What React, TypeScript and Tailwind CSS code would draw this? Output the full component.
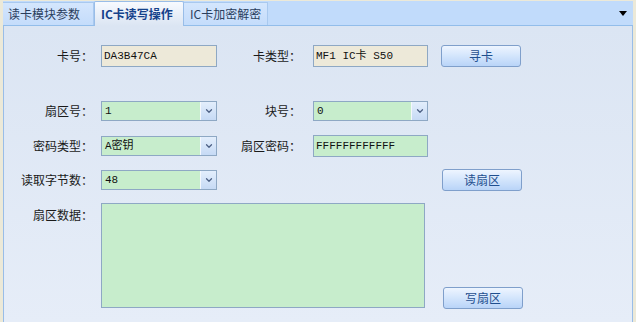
import { ChevronDown } from "lucide-react";

const cjk = "font-['Noto_Sans_CJK_SC','Noto_Sans',sans-serif]";
const mono = "font-['Liberation_Mono','Noto_Sans_CJK_SC',monospace]";

function Label({ text, className = "" }: { text: string; className?: string }) {
  return <div className={`shrink-0 text-right text-[12px] leading-[14px] text-[#1a1a1a] ${cjk} ${className}`}>{text}</div>;
}

function TextBox({ value, tone, w }: { value: string; tone: "beige" | "green"; w: string }) {
  const bg = tone === "beige" ? "bg-[#ede9d9]" : "bg-[#c7edcc]";
  return (
    <div className={`${w} h-[22px] shrink-0 border border-[#8ea8c4] ${bg} flex items-center pl-[2px] text-[11px] text-[#111] ${mono}`}>
      {value}
    </div>
  );
}

function Select({ value, w }: { value: string; w: string }) {
  return (
    <div className={`${w} h-[20px] shrink-0 border border-[#8ea8c4] bg-[#c7edcc] flex`}>
      <div className={`flex-1 flex items-center pl-[3px] text-[11px] text-[#111] ${mono}`}>{value}</div>
      <div className="w-[16px] border-l border-[#f4f8fd] bg-gradient-to-b from-[#e3eefc] to-[#c6daf5] flex items-center justify-center">
        <ChevronDown size={10} strokeWidth={3} className="text-[#4d6185]" />
      </div>
    </div>
  );
}

function Button({ text }: { text: string }) {
  return (
    <div className={`w-[80px] h-[22px] shrink-0 rounded-[3px] border border-[#7f9fcb] bg-gradient-to-b from-[#eef5ff] via-[#d3e5fc] to-[#b9d4f8] flex items-center justify-center text-[12px] text-[#1f4f8f] ${cjk}`}>
      {text}
    </div>
  );
}

export default function App() {
  return (
    <div className="w-[636px] h-[322px] bg-[#ece9d8] pt-px pl-[3px] pr-[3px] flex flex-col">
      {/* tab strip */}
      <div className="h-[25px] shrink-0 bg-[#c1dbfb] border-b border-[#92bdea] flex items-end relative">
        <div className={`h-[23px] w-[91px] border-r border-t border-[#a9c9ef] bg-gradient-to-b from-[#d4e6fd] to-[#c4dcfb] flex items-center pl-[5px] text-[12px] text-[#2a3d5c] ${cjk}`}>
          读卡模块参数
        </div>
        <div className={`h-[25px] w-[90px] -mb-px rounded-t-[2px] border border-b-0 border-[#99bde8] bg-gradient-to-b from-[#f7faff] to-[#dbe5f3] flex items-center pl-[6px] text-[12px] font-bold text-[#15428b] ${cjk}`}>
          IC卡读写操作
        </div>
        <div className={`h-[23px] w-[84px] border-r border-t border-[#a9c9ef] bg-gradient-to-b from-[#d4e6fd] to-[#c4dcfb] flex items-center pl-[6px] text-[12px] text-[#2a3d5c] ${cjk}`}>
          IC卡加密解密
        </div>
        <div className="flex-1" />
        <div className="self-center mr-[6px] mt-px w-0 h-0 border-l-[4px] border-r-[4px] border-t-[5px] border-l-transparent border-r-transparent border-t-black" />
      </div>

      {/* panel */}
      <div className="flex-1 border-x border-[#99bde8] bg-gradient-to-b from-[#dbe5f3] to-[#e6edf8] pt-[19px] flex flex-col">
        <div className="flex items-center">
          <Label text="卡号：" className="w-[89px]" />
          <div className="ml-[8px]"><TextBox value="DA3B47CA" tone="beige" w="w-[116px]" /></div>
          <Label text="卡类型：" className="w-[84px]" />
          <div className="ml-[12px]"><TextBox value="MF1 IC卡 S50" tone="beige" w="w-[115px]" /></div>
          <div className="ml-[13px]"><Button text="寻卡" /></div>
        </div>

        <div className="flex items-center mt-[34px]">
          <Label text="扇区号：" className="w-[89px]" />
          <div className="ml-[8px]"><Select value="1" w="w-[116px]" /></div>
          <Label text="块号：" className="w-[84px]" />
          <div className="ml-[12px]"><Select value="0" w="w-[115px]" /></div>
        </div>

        <div className="flex items-center mt-[14px]">
          <Label text="密码类型：" className="w-[89px]" />
          <div className="ml-[8px]"><Select value="A密钥" w="w-[116px]" /></div>
          <Label text="扇区密码：" className="w-[84px]" />
          <div className="ml-[12px]"><TextBox value="FFFFFFFFFFFF" tone="green" w="w-[115px]" /></div>
        </div>

        <div className="flex items-center mt-[12px]">
          <Label text="读取字节数：" className="w-[89px]" />
          <div className="ml-[8px]"><Select value="48" w="w-[116px]" /></div>
          <div className="w-[84px]" />
          <div className="ml-[12px] w-[115px]" />
          <div className="ml-[14px]"><Button text="读扇区" /></div>
        </div>

        <div className="flex items-start mt-[12px]">
          <Label text="扇区数据：" className="w-[89px] mt-[5px]" />
          <div className="ml-[8px] w-[324px] h-[105px] border border-[#8ea8c4] bg-[#c7edcc]" />
          <div className="ml-[18px] self-end mb-[-1px]"><Button text="写扇区" /></div>
        </div>
      </div>
    </div>
  );
}
